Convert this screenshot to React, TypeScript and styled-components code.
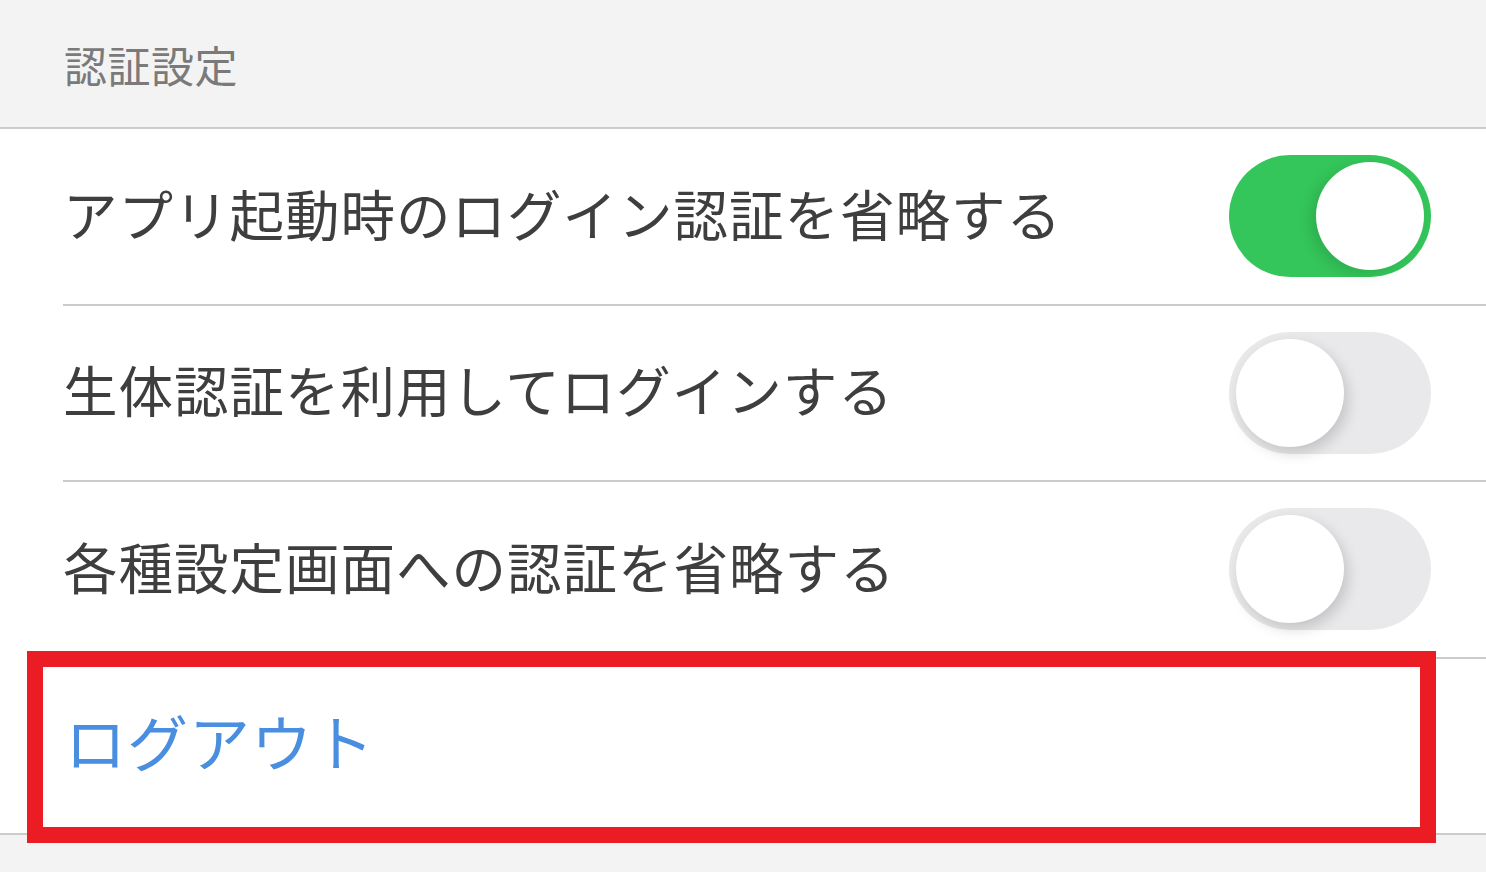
import React from 'react'
import styled, { createGlobalStyle } from 'styled-components'

const GlobalStyle = createGlobalStyle`
  html, body {
    margin: 0;
    padding: 0;
    background: #f3f3f3;
  }
  body {
    font-family: "Noto Sans CJK JP", "Noto Sans", sans-serif;
  }
`

const Page = styled.div`
  display: flex;
  flex-direction: column;
  width: 1486px;
  height: 872px;
  overflow: hidden;
  background: #f3f3f3;
`

const SectionHeader = styled.div`
  display: flex;
  align-items: center;
  height: 127px;
  padding-left: 64px;
  font-size: 43px;
  color: #7a7a7a;
  letter-spacing: 0.5px;
  border-bottom: 2px solid #cbcbcb;
`

const List = styled.div`
  display: flex;
  flex-direction: column;
  background: #fff;
`

const Row = styled.div<{ $last?: boolean }>`
  position: relative;
  padding-left: ${(p) => (p.$last ? 0 : 63)}px;
`

const Cell = styled.div<{ $last?: boolean }>`
  display: flex;
  align-items: center;
  justify-content: space-between;
  height: 174.5px;
  padding-left: ${(p) => (p.$last ? 65 : 0)}px;
  padding-right: 55px;
  border-bottom: 2px solid #cbcbcb;
`

const Label = styled.span`
  font-size: 54.5px;
  color: #3e3e3e;
  letter-spacing: 1px;
  margin-bottom: 8px;
`

const LinkLabel = styled.span`
  font-size: 61px;
  color: #4a8ee0;
  letter-spacing: 1px;
  margin-bottom: 10px;
`

const Track = styled.div<{ $on: boolean }>`
  position: relative;
  width: 202px;
  height: 122px;
  border-radius: 61px;
  box-sizing: border-box;
  background: ${(p) => (p.$on ? '#34c65a' : '#e9e9eb')};
  flex: 0 0 auto;
`

const Knob = styled.div<{ $on: boolean }>`
  position: absolute;
  top: 7px;
  ${(p) => (p.$on ? 'right: 7px;' : 'left: 7px;')}
  width: 108px;
  height: 108px;
  border-radius: 50%;
  background: #fff;
  box-shadow: ${(p) =>
    p.$on
      ? '-6px 4px 14px rgba(0, 0, 0, 0.12)'
      : '4px 6px 14px rgba(0, 0, 0, 0.16)'};
`

const Highlight = styled.div`
  position: absolute;
  top: -8px;
  left: 27px;
  right: 50px;
  bottom: -8px;
  border: 16px solid #ec1c24;
  pointer-events: none;
`

const Toggle = ({ on }: { on: boolean }) => (
  <Track $on={on}>
    <Knob $on={on} />
  </Track>
)

const settings = [
  { label: 'アプリ起動時のログイン認証を省略する', on: true },
  { label: '生体認証を利用してログインする', on: false },
  { label: '各種設定画面への認証を省略する', on: false },
]

const App = () => {
  return (
    <Page>
      <GlobalStyle />
      <SectionHeader>認証設定</SectionHeader>
      <List>
        {settings.map((s) => (
          <Row key={s.label}>
            <Cell>
              <Label>{s.label}</Label>
              <Toggle on={s.on} />
            </Cell>
          </Row>
        ))}
        <Row $last>
          <Cell $last>
            <LinkLabel>ログアウト</LinkLabel>
          </Cell>
          <Highlight />
        </Row>
      </List>
    </Page>
  )
}

export default App
